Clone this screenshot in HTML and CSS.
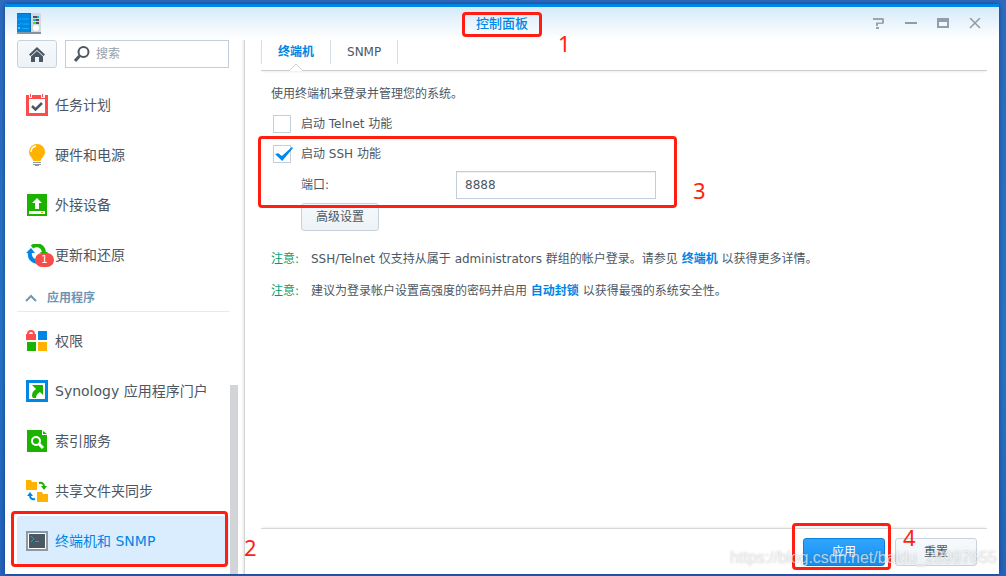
FILE: index.html
```html
<!DOCTYPE html>
<html lang="zh-CN">
<head>
<meta charset="utf-8">
<title>控制面板</title>
<link rel="stylesheet" href="styles.css">
</head>
<body>
<div class="window">
  <header class="titlebar">
    <svg class="app-icon" width="24" height="21" viewBox="0 0 24 21">
      <rect width="24" height="20" fill="#d3dade"/><rect y="19" width="24" height="2" fill="#8494a0"/>
      <rect width="14" height="19" fill="#0086e5"/><rect width="14" height="1" fill="#0873b8"/><rect x="13" width="1" height="19" fill="#0873b8"/>
      <path d="M1 6l1 1 2-2M5 6h7M1 11l1 1 2-2M5 11h7M5 15.500h7" fill="none" stroke="#16adf7"/><rect x="1" y="14" width="2" height="2" fill="#3ed4ff"/>
      <path d="M16 4h6M16 7h6M16 10h6" stroke="#45525f" stroke-width="2"/><path d="M20 4h2M16 7h3" stroke="#08b3ee" stroke-width="2"/><path d="M16 10h3" stroke="#77d400" stroke-width="2"/>
      <circle cx="19" cy="15" r="3" fill="#fff"/>
    </svg>
    <h1 class="title">控制面板<span class="mark mark-title"></span><span class="mark-num num-1">1</span></h1>
    <div class="controls">
      <button type="button" aria-label="帮助"><svg width="12" height="12" viewBox="0 0 12 12"><path d="M0 0h10l1 1v4l-1 1H5v2H3V4.500h6V2H0zM3 9h3v2H3z" fill="#9ba5ae"/></svg></button>
      <button type="button" aria-label="最小化"><svg width="12" height="12" viewBox="0 0 12 12"><path d="M0 5h12" stroke="#909da7" stroke-width="2"/></svg></button>
      <button type="button" aria-label="最大化"><svg width="12" height="12" viewBox="0 0 12 12"><path d="M0 0h12v10H0z" fill="#929faa"/><path d="M2 4h8v4H2z" fill="#f0f8fe"/></svg></button>
      <button type="button" aria-label="关闭"><svg width="12" height="12" viewBox="0 0 12 12"><path d="M1 0l10 10M11 0L1 10" stroke="#919ca5" stroke-width="1.500"/></svg></button>
    </div>
  </header>
  <div class="body">
    <aside class="sidebar">
      <div class="search-row">
        <button type="button" class="btn home" aria-label="主页"><svg width="16" height="16" viewBox="0 0 16 16"><path d="M0 8.500L8 1l8 7.500-1.500 1.500L8 4 1.500 10z" fill="#4b5763"/><path d="M2 10.500L8 5l6 5.500V16h-4v-5H6v5H2z" fill="#4b5763"/></svg></button>
        <label class="search">
          <svg width="16" height="16" viewBox="0 0 16 16"><circle cx="9.500" cy="6" r="5" fill="none" stroke="#4b5763" stroke-width="2"/><path d="M5.500 10L1 15" stroke="#4b5763" stroke-width="3"/></svg>
          <input type="text" placeholder="搜索" aria-label="搜索">
        </label>
      </div>
      <nav>
        <ul class="menu">
          <li><a href="#"><svg width="22" height="22" viewBox="0 0 22 22"><path d="M0 1h3v3h3V1h9v3h4V1h3v21H0z" fill="#ff4b4b"/><path d="M3 5h16v14H3z" fill="#fff"/><path d="M4 0h1v3H4zM16 0h1v3h-1z" fill="#ff4b4b"/><path d="M6 12l3.500 3.500L16 9" fill="none" stroke="#4b5763" stroke-width="2.500"/></svg>任务计划</a></li>
          <li><a href="#"><svg width="22" height="22" viewBox="0 0 22 22"><path d="M11 0a8 8 0 0 0-8 8c0 4 3 5 4.500 9h7C16 13 19 12 19 8a8 8 0 0 0-8-8z" fill="#ffb300"/><path d="M5 8q0-5 5-6" fill="none" stroke="#fff" stroke-width="1.500"/><path d="M7 18.500h8M7 20.500h8" stroke="#8d999f"/><path d="M9 21.500h4" stroke="#8d999f"/></svg>硬件和电源</a></li>
          <li><a href="#"><svg width="22" height="22" viewBox="0 0 22 22"><path d="M1 0h20v22H1z" fill="#1bb300"/><path d="M11 4l5 5h-3v6H9V9H6z" fill="#fff"/><path d="M3 17h16v3H3z" fill="#fff"/><path d="M15 18h2v1h-2z" fill="#ff9d00"/></svg>外接设备</a></li>
          <li><a href="#"><span class="icon-wrap"><svg width="22" height="22" viewBox="0 0 22 22"><path d="M6 3c5-4 11-1 12 5" fill="none" stroke="#1bb300" stroke-width="4"/><path d="M14 8h8l-4 5z" fill="#1bb300"/><path d="M4 8c-1 6 2 9 8 10" fill="none" stroke="#0086e5" stroke-width="4"/><path d="M0 9l5-5 4 5z" fill="#0086e5"/></svg><span class="badge">1</span></span>更新和还原</a></li>
        </ul>
        <button type="button" class="section"><svg width="12" height="8" viewBox="0 0 12 8"><path d="M1 7l5-5 5 5" fill="none" stroke="#7197b5" stroke-width="2"/></svg>应用程序</button>
        <ul class="menu">
          <li><a href="#"><svg width="22" height="22" viewBox="0 0 22 22"><path d="M0 4h1a4 4 0 0 1 8 0h1v6H0z" fill="#ff4b4b"/><path d="M3 4a2 2 0 0 1 4 0z" fill="#fff"/><path d="M12 1h9v9h-9z" fill="#0086e5"/><path d="M1 12h9v9H1z" fill="#1bb300"/><path d="M12 12h9v9h-9z" fill="#ffb300"/></svg>权限</a></li>
          <li><a href="#"><svg width="22" height="22" viewBox="0 0 22 22"><path d="M1.500 1.500h19v19h-19z" fill="#fff" stroke="#0086e5" stroke-width="3"/><path d="M6 5h11v10l-3-3q-4 2-4 6H7q-3-5 3-9z" fill="#1bb300"/></svg>Synology 应用程序门户</a></li>
          <li><a href="#"><svg width="22" height="22" viewBox="0 0 22 22"><path d="M1 0h15v5h5v17H1zM17 1l4 3h-4z" fill="#1bb300"/><circle cx="10" cy="11" r="4" fill="none" stroke="#fff" stroke-width="2"/><path d="M13 14l4 4" stroke="#fff" stroke-width="3"/></svg>索引服务</a></li>
          <li><a href="#"><svg width="22" height="22" viewBox="0 0 22 22"><path d="M0 0h5l1 2h5v8H0zM11 12h5l1 2h5v8H11z" fill="#ffb300"/><path d="M13 3q5-1 5 4" fill="none" stroke="#1bb300" stroke-width="2"/><path d="M15 6h6l-3 4z" fill="#1bb300"/><path d="M4 15q0 5 5 4" fill="none" stroke="#0086e5" stroke-width="2"/><path d="M1 16l3-4 3 4z" fill="#0086e5"/></svg>共享文件夹同步</a></li>
          <li class="selected"><a href="#"><svg width="22" height="22" viewBox="0 0 22 22"><path d="M0 1h22v20H0z" fill="#8c98a3"/><path d="M2.500 3.500h17v15h-17z" fill="#4b5763" stroke="#fff"/><path d="M5 6l3 3-3 3M9 11.500h4" fill="none" stroke="#00b7b7"/></svg>终端机和 SNMP</a><span class="mark mark-menu"></span><span class="mark-num num-2">2</span></li>
        </ul>
      </nav>
      <div class="scroll-thumb"></div>
    </aside>
    <main class="main">
      <div class="tabs" role="tablist">
        <button type="button" role="tab" class="tab active" aria-selected="true">终端机<svg class="notch" width="14" height="8" viewBox="0 0 14 8"><path d="M0 8L7 1l7 7" fill="#fff" stroke="#cdcdcd"/></svg></button>
        <button type="button" role="tab" class="tab" aria-selected="false">SNMP</button>
      </div>
      <form class="panel">
        <p class="intro">使用终端机来登录并管理您的系统。</p>
        <label class="check"><input type="checkbox">启动 Telnet 功能</label>
        <div class="ssh">
          <label class="check"><input type="checkbox" checked>启动 SSH 功能</label>
          <div class="field"><label for="port">端口:</label><input id="port" type="text" value="8888"></div>
          <span class="mark mark-ssh"></span><span class="mark-num num-3">3</span>
        </div>
        <button type="button" class="btn advanced">高级设置</button>
        <p class="note"><span class="note-label">注意:</span><span>SSH/Telnet 仅支持从属于 administrators 群组的帐户登录。请参见 <a href="#">终端机</a> 以获得更多详情。</span></p>
        <p class="note"><span class="note-label">注意:</span><span>建议为登录帐户设置高强度的密码并启用 <a href="#">自动封锁</a> 以获得最强的系统安全性。</span></p>
      </form>
      <footer class="footer">
        <div class="apply"><button type="button" class="btn primary">应用</button><span class="mark mark-apply"></span><span class="mark-num num-4">4</span></div>
        <button type="button" class="btn">重置</button>
      </footer>
    </main>
  </div>
  <div class="watermark">https://blog.csdn.net/baidu_28997655</div>
</div>
</body>
</html>
```
FILE: styles.css
```css
* { box-sizing: border-box; }

body {
  margin: 0;
  min-height: 100vh;
  display: flex;
  padding: 4px 7px 2px 5px;
  background: linear-gradient(#2d6cc0, #2575c9 60%, #2464bd);
  font: 12px/20px "DejaVu Sans", "Noto Sans CJK SC", sans-serif;
  color: #4b5763;
}

button, input { font: inherit; color: inherit; }
button { border: 0; background: none; padding: 0; }
a { color: inherit; text-decoration: none; }
ul, p, h1 { margin: 0; padding: 0; list-style: none; }
svg { display: block; flex: none; }

.window {
  position: relative;
  flex: 1;
  min-width: 0;
  display: flex;
  flex-direction: column;
  border-top: 3px solid #0086e5;
  background: linear-gradient(#d5eafa, #fff 32px);
  box-shadow: 0 0 5px rgba(0, 20, 80, .5);
}

.titlebar {
  display: grid;
  grid-template-columns: 1fr auto 1fr;
  align-items: center;
  height: 33px;
  padding: 0 12px;
}
.title { position: relative; font-size: 13px; font-weight: 500; line-height: 20px; color: #0086e5; }
.controls { display: flex; gap: 20px; justify-content: flex-end; padding-right: 6px; }

.body { flex: 1; display: flex; }

.sidebar {
  position: relative;
  flex: none;
  width: 240px;
  padding: 0 15px 8px 12px;
  border-right: 1px solid #d4d4d4;
  box-shadow: inset -3px 0 3px -2px #e4e4e4;
}
.search-row { display: flex; gap: 8px; margin-bottom: 12px; }
.btn {
  height: 28px;
  min-width: 82px;
  border: 1px solid #c8d2dc;
  border-radius: 3px;
  background: linear-gradient(#f7fafc, #ecf2f7);
}
.home { min-width: 40px; display: grid; place-items: center; }
.search {
  flex: 1;
  min-width: 0;
  display: flex;
  align-items: center;
  gap: 6px;
  height: 28px;
  padding: 0 8px;
  border: 1px solid #c2ceda;
  background: #fff;
}
.search input { flex: 1; min-width: 0; border: 0; padding: 0; background: none; outline: 0; }
.search input::placeholder { color: #96a0aa; opacity: 1; }

.menu li { position: relative; height: 50px; }
.menu a { display: flex; align-items: center; gap: 7px; height: 50px; padding-left: 9px; font-size: 14px; white-space: nowrap; }
.menu .selected a { background: #d9edff; border-radius: 3px; color: #0086e5; }
.icon-wrap { position: relative; }
.badge {
  position: absolute;
  left: 9px;
  top: 9px;
  width: 19px;
  height: 14px;
  border-radius: 7px;
  background: #fa4b4b;
  color: #fff;
  font-size: 10px;
  line-height: 14px;
  text-align: center;
}
.section {
  display: flex;
  align-items: center;
  gap: 10px;
  width: 100%;
  height: 32px;
  margin-bottom: 4px;
  padding: 4px 8px 0;
  border-bottom: 1px solid #e8eaec;
  color: #6e95b4;
  font-weight: 700;
}
.scroll-thumb { position: absolute; right: 6px; bottom: 0; width: 8px; height: 189px; background: #d2d4d7; }

.main { flex: 1; min-width: 0; display: flex; flex-direction: column; padding: 0 12px 8px 16px; background: #fff; }
.tabs {
  display: flex;
  padding-bottom: 6px;
  border-bottom: 1px solid #cdcdcd;
  box-shadow: 0 2px 2px -1px #eee;
}
.tab { position: relative; height: 24px; padding: 0 16px; border-right: 1px solid #d5dfe8; }
.active { border-left: 1px solid #d5dfe8; font-weight: 700; color: #0086e5; }
.notch { position: absolute; left: 50%; bottom: -7px; margin-left: -7px; }

.panel { flex: 1; padding: 13px 10px; }
.intro { margin-bottom: 5px; }
.check { display: flex; align-items: center; gap: 10px; height: 30px; padding-left: 2px; }
.check input {
  position: relative;
  appearance: none;
  width: 18px;
  height: 18px;
  margin: 0;
  border: 1px solid #c2ceda;
  background: #fff;
}
.check input:checked::after {
  content: "";
  position: absolute;
  left: 1px;
  top: 1px;
  width: 18px;
  height: 14px;
  background: #0089ed;
  clip-path: polygon(0 50%, 18% 45%, 38% 64%, 94% 0, 100% 8%, 40% 100%);
}
.ssh { position: relative; }
.field { display: grid; grid-template-columns: 155px 200px; align-items: center; padding: 2px 0 4px 30px; }
.field input { height: 28px; min-width: 0; border: 1px solid #c2ceda; padding: 0 8px; box-shadow: inset 0 1px 1px #edf1f4; background: #fff; }
.advanced { display: block; min-width: 78px; margin: 0 0 18px 30px; }
.note { display: grid; grid-template-columns: 40px 1fr; margin-bottom: 12px; }
.note-label { color: #00a06c; }
.note a { color: #0086e5; font-weight: 700; }

.footer {
  display: flex;
  justify-content: flex-end;
  gap: 10px;
  padding: 9px 10px 0;
  border-top: 1px solid #d8d8d8;
  box-shadow: 0 -2px 2px -1px #eee;
}
.apply { position: relative; }
.primary { display: block; border-color: #0a82dc; background: linear-gradient(#30a5ff, #168fee); color: #fff; }

.mark { position: absolute; border: 3px solid #ff1e12; border-radius: 4px; pointer-events: none; z-index: 2; }
.mark-title { inset: -2px -14px -3px; }
.mark-menu { inset: -5px 1px -1px -6px; }
.mark-ssh { inset: -3px auto -5px -13px; width: 419px; }
.mark-apply { inset: -15px -6px -4px -11px; }
.mark-num { position: absolute; z-index: 3; color: #ff1e12; font: 22px/24px "Noto Sans", sans-serif; }
.num-1 { left: 82px; top: 17px; }
.num-2 { left: 227px; top: 19px; }
.num-3 { left: 422px; top: 39px; }
.num-4 { left: 100px; top: -13px; }

.watermark {
  position: absolute;
  right: 2px;
  bottom: 6px;
  z-index: 4;
  color: rgba(255, 255, 255, .65);
  font: 16px/20px "Liberation Sans", Arial, sans-serif;
  text-shadow: 0 0 2px rgba(80, 80, 80, .35);
  pointer-events: none;
}
```
